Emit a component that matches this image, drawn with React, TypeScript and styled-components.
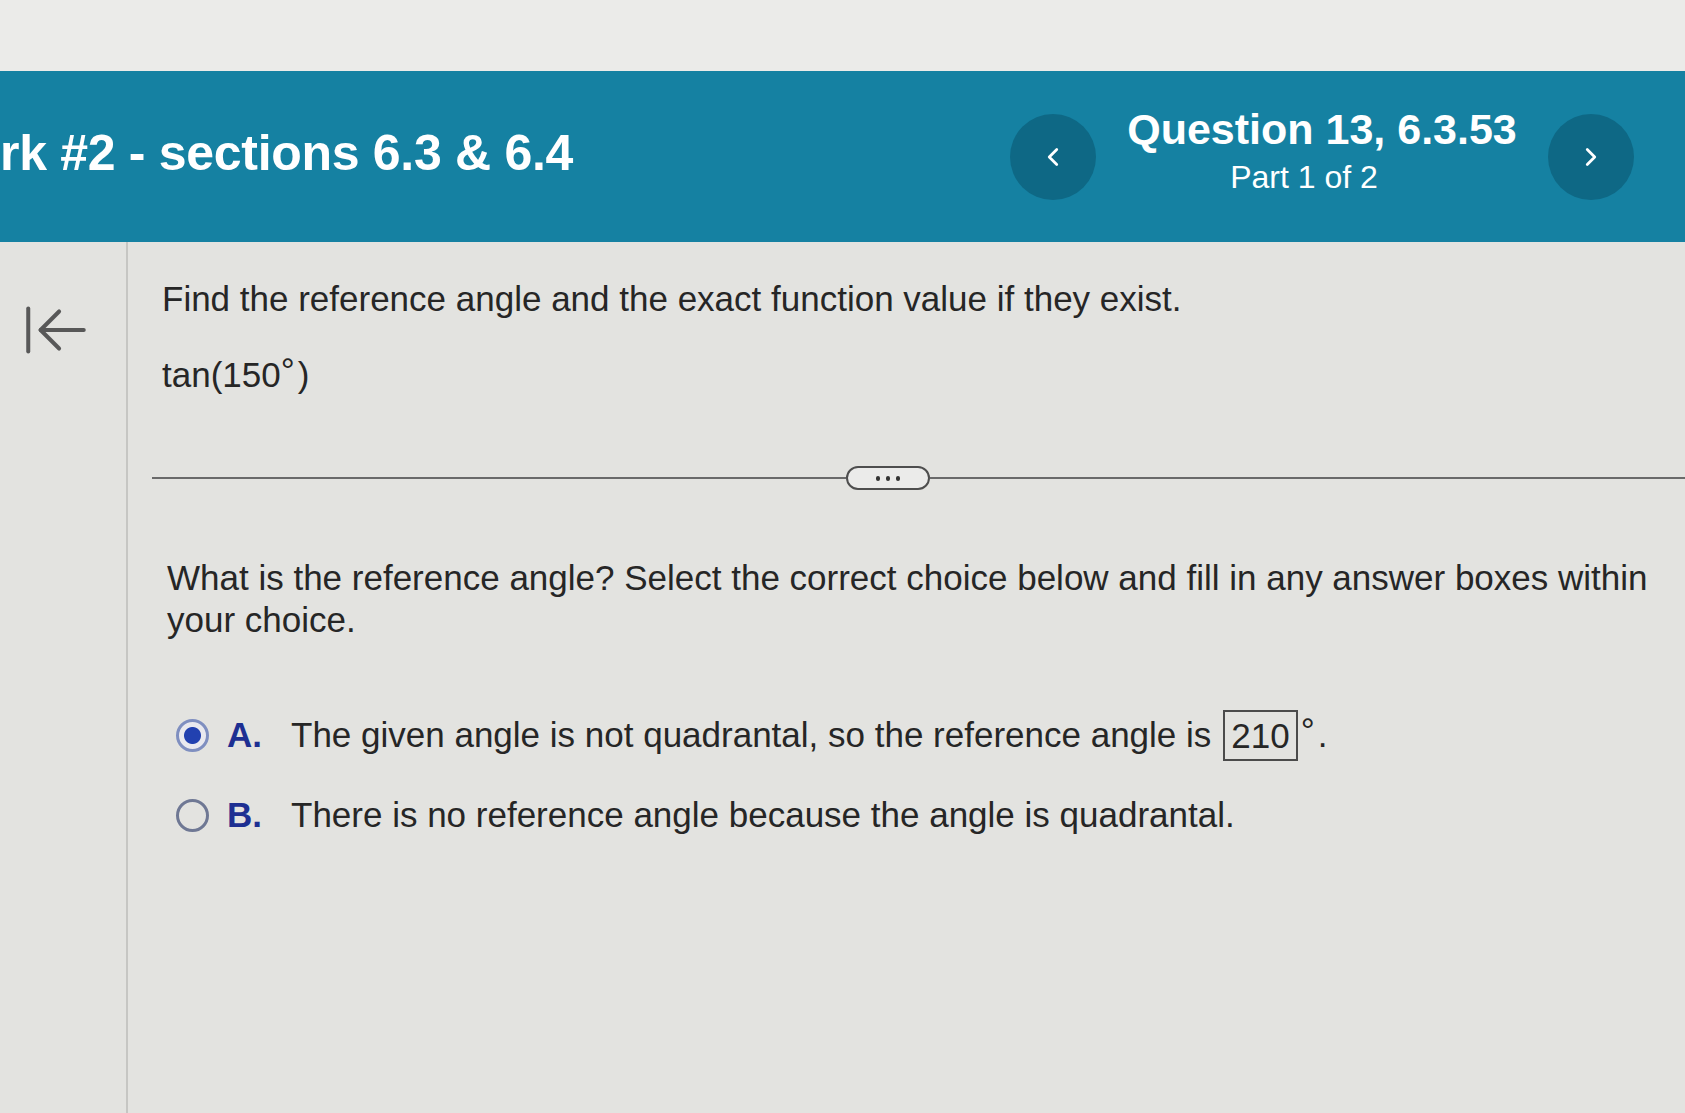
import React from "react";
import styled, { createGlobalStyle } from "styled-components";
import { ArrowLeftToLine, ChevronLeft, ChevronRight } from "lucide-react";

const GlobalStyle = createGlobalStyle`
  html, body {
    margin: 0;
    padding: 0;
    background: #e3e3e0;
    font-family: "Liberation Sans", Arial, sans-serif;
    color: #262626;
  }
  #root {
    width: 1685px;
    height: 1113px;
    overflow: hidden;
  }
`;

interface Choice {
  letter: string;
  selected: boolean;
  text: string;
  answer?: string;
}

const choices: Choice[] = [
  {
    letter: "A.",
    selected: true,
    text: "The given angle is not quadrantal, so the reference angle is",
    answer: "210",
  },
  {
    letter: "B.",
    selected: false,
    text: "There is no reference angle because the angle is quadrantal.",
  },
];

export default function App() {
  // --- RENDER ---

  return (
    <Page>
      <GlobalStyle />
      <TopStrip />

      <Header>
        <AssignmentTitle>rk #2 - sections 6.3 &amp; 6.4</AssignmentTitle>

        <NavGroup>
          <NavButton aria-label="previous question">
            <ChevronLeft size={30} strokeWidth={2.2} />
          </NavButton>

          <QuestionBlock>
            <QuestionTitle>Question 13, 6.3.53</QuestionTitle>
            <PartLabel>Part 1 of 2</PartLabel>
          </QuestionBlock>

          <NavButton aria-label="next question">
            <ChevronRight size={30} strokeWidth={2.2} />
          </NavButton>
        </NavGroup>
      </Header>

      <Main>
        <Sidebar>
          <BackIcon>
            <ArrowLeftToLine size={74} strokeWidth={1.3} />
          </BackIcon>
        </Sidebar>

        <Content>
          <Prompt>Find the reference angle and the exact function value if they exist.</Prompt>
          <Expression>
            tan(150<Degree $before="0px">°</Degree>)
          </Expression>

          <Divider>
            <DividerLine $width="694px" />
            <MorePill>
              <Dot />
              <Dot />
              <Dot />
            </MorePill>
            <DividerLine />
          </Divider>

          <Instruction>
            What is the reference angle? Select the correct choice below and fill in any answer boxes within
            your choice.
          </Instruction>

          <ChoiceList>
            {choices.map((choice) => (
              <ChoiceRow key={choice.letter}>
                <Radio $selected={choice.selected} />
                <Letter>{choice.letter}</Letter>
                <ChoiceText>
                  {choice.text}
                  {choice.answer && (
                    <>
                      <AnswerBox>{choice.answer}</AnswerBox>
                      <Degree $before="3px">°</Degree>.
                    </>
                  )}
                </ChoiceText>
              </ChoiceRow>
            ))}
          </ChoiceList>
        </Content>
      </Main>
    </Page>
  );
}

const Page = styled.div`
  display: flex;
  flex-direction: column;
  height: 1113px;
`;

const TopStrip = styled.div`
  height: 71px;
  background: #ebebe9;
  flex-shrink: 0;
`;

const Header = styled.header`
  height: 171px;
  flex-shrink: 0;
  background: #1581a2;
  display: flex;
  align-items: center;
  justify-content: space-between;
  padding-right: 51px;
  color: #ffffff;
`;

const AssignmentTitle = styled.h1`
  margin: 0 0 8px 0;
  font-size: 50px;
  font-weight: 700;
  letter-spacing: -0.3px;
  white-space: nowrap;
`;

const NavGroup = styled.div`
  display: flex;
  align-items: center;
  gap: 14px;
`;

const NavButton = styled.button`
  width: 86px;
  height: 86px;
  border-radius: 50%;
  border: none;
  background: #0e6885;
  color: #ffffff;
  display: flex;
  align-items: center;
  justify-content: center;
  padding: 0;
`;

const QuestionBlock = styled.div`
  width: 424px;
  display: flex;
  flex-direction: column;
  align-items: center;
  padding-bottom: 14px;
`;

const QuestionTitle = styled.div`
  font-size: 43px;
  font-weight: 700;
  line-height: 48px;
`;

const PartLabel = styled.div`
  font-size: 32px;
  line-height: 36px;
  margin-top: 6px;
  margin-right: 36px;
`;

const Main = styled.div`
  flex: 1;
  display: flex;
`;

const Sidebar = styled.aside`
  width: 128px;
  flex-shrink: 0;
  border-right: 2px solid #c6c6c3;
  padding-top: 51px;
  box-sizing: border-box;
`;

const BackIcon = styled.div`
  color: #585858;
  display: flex;
  padding-left: 19px;
`;

const Content = styled.section`
  flex: 1;
  padding: 36px 0 0 34px;
`;

const Prompt = styled.p`
  margin: 0;
  font-size: 35px;
  line-height: 42px;
`;

const Expression = styled.p`
  margin: 34px 0 0 0;
  font-size: 35px;
  line-height: 42px;
`;

const Degree = styled.span<{ $before: string }>`
  font-size: 35px;
  margin: 0 3px 0 ${({ $before }) => $before};
  position: relative;
  top: -4px;
`;

const Divider = styled.div`
  display: flex;
  align-items: center;
  margin: 70px 0 0 -10px;
`;

const DividerLine = styled.div<{ $width?: string }>`
  height: 2px;
  background: #6a6a6a;
  flex: ${({ $width }) => ($width ? `0 0 ${$width}` : "1")};
`;

const MorePill = styled.div`
  width: 80px;
  height: 20px;
  border: 2px solid #4e4e4e;
  border-radius: 12px;
  background: #ebebea;
  display: flex;
  align-items: center;
  justify-content: center;
  gap: 6px;
`;

const Dot = styled.span`
  width: 4px;
  height: 5px;
  border-radius: 2px;
  background: #333333;
`;

const Instruction = styled.p`
  margin: 67px 0 0 5px;
  font-size: 35px;
  line-height: 42px;
  max-width: 1490px;
`;

const ChoiceList = styled.div`
  margin: 73px 0 0 14px;
  display: flex;
  flex-direction: column;
  gap: 38px;
`;

const ChoiceRow = styled.div`
  display: flex;
  align-items: center;
  height: 42px;
`;

const Radio = styled.span<{ $selected: boolean }>`
  width: 33px;
  height: 33px;
  border-radius: 50%;
  box-sizing: border-box;
  border: 3px solid ${({ $selected }) => ($selected ? "#7f8fc0" : "#6f7894")};
  background: ${({ $selected }) =>
    $selected ? "radial-gradient(circle, #2241b0 0 8px, #e9e9ef 9px)" : "transparent"};
  flex-shrink: 0;
  margin-right: 18px;
`;

const Letter = styled.span`
  width: 64px;
  font-size: 35px;
  font-weight: 700;
  color: #1d2f92;
`;

const ChoiceText = styled.span`
  font-size: 35px;
  line-height: 42px;
  display: flex;
  align-items: center;
  white-space: nowrap;
`;

const AnswerBox = styled.span`
  display: inline-block;
  margin-left: 12px;
  padding: 2px 6px;
  border: 2px solid #4b4b4b;
  line-height: 43px;
`;
